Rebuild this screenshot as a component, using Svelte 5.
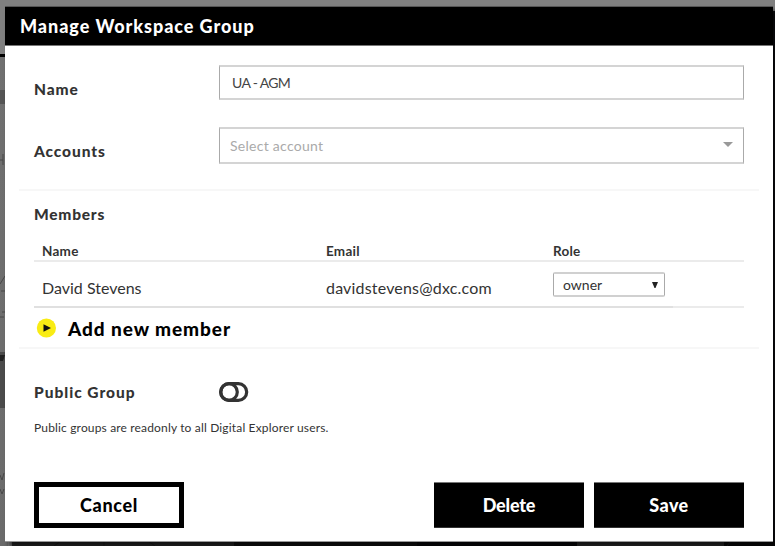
<script>
  const members = [{ name: 'David Stevens', email: 'davidstevens@dxc.com', role: 'owner' }];
</script>

<div class="page">
  <svg class="backdrop" width="775" height="546" viewBox="0 0 775 546" aria-hidden="true">
    <defs>
      <linearGradient id="left" x1="0" y1="0" x2="0" y2="1">
        <stop offset="0" stop-color="#707070" />
        <stop offset="1" stop-color="#6b6b6b" />
      </linearGradient>
    </defs>
    <rect width="775" height="546" fill="#808080" />
    <rect y="56" width="8" height="490" fill="url(#left)" />
    <rect y="54" width="6" height="3" fill="#000" />
    <rect y="90" width="6" height="14" fill="#555" />
    <rect y="352" width="6" height="56" fill="#4b4b4b" />
    <path d="M0 355h5l-2 6H0z" fill="#222" />
    <path d="M0 160h3M3 154v11M0 284l5-8M1 291h4M2 312h3M0 317h4M0 475l2 5 2-7M0 489l2 5 2-5" stroke="#484848" fill="none" />
    <rect x="773" y="11" width="2" height="535" fill="#101114" />
    <rect x="12" y="541" width="763" height="5" fill="#323232" />
    <rect x="234" y="541" width="183" height="5" fill="#141414" />
    <rect x="417" y="541" width="160" height="5" fill="#09090b" />
    <rect x="577" y="541" width="147" height="5" fill="#363636" />
    <rect x="724" y="541" width="51" height="5" fill="#0b0b0c" />
    <path d="M54 546l7-5M104 546v-5M155 546l-7-5M727 546l4-5" stroke="#222" />
  </svg>

  <section class="modal">
    <header><span>Manage Workspace Group</span></header>
    <div class="body">
      <div class="field name">
        <label for="group-name">Name</label>
        <div class="input" id="group-name"><span>UA - AGM</span></div>
      </div>
      <div class="field accounts">
        <label for="account">Accounts</label>
        <div class="input" id="account">
          <span>Select account</span>
          <svg width="10" height="5" viewBox="0 0 10 5"><path d="M0 0h10L5 5z" fill="#999" /></svg>
        </div>
      </div>
      <div class="members">
        <h2>Members</h2>
        <div class="row head"><b class="h-name">Name</b><b class="h-email">Email</b><b class="h-role">Role</b></div>
        {#each members as m}
          <div class="row member">
            <span class="m-name">{m.name}</span>
            <span class="m-email">{m.email}</span>
            <div class="select">
              <span>{m.role}</span>
              <svg width="6" height="6" viewBox="0 0 6 6"><path d="M0 0h6L3.5 6h-1z" fill="#222" /></svg>
            </div>
          </div>
          <div class="underline"></div>
        {/each}
        <div class="add">
          <svg width="20" height="20" viewBox="0 0 20 20"><circle cx="10.4" cy="10" r="9.6" fill="#f9ec14" /><path d="M7.5 6.2L15 10 7.5 13.8z" fill="#111" /></svg>
          <span>Add new member</span>
        </div>
      </div>
      <div class="public">
        <span class="plabel">Public Group</span>
        <svg width="30" height="20" viewBox="0 0 30 20" fill="none" stroke="#333" stroke-width="3.2">
          <rect x="1.7" y="1.7" width="26" height="16.6" rx="8.3" /><circle cx="10" cy="10" r="8.3" />
        </svg>
      </div>
      <p><span>Public groups are readonly to all Digital Explorer users.</span></p>
      <footer>
        <button class="cancel">Cancel</button>
        <button class="delete">Delete</button>
        <button class="save">Save</button>
      </footer>
    </div>
  </section>
</div>

<style>
  :global(body) { margin: 0; overflow: hidden; }
  .page { position: relative; width: 775px; height: 546px; overflow: hidden; box-sizing: border-box; padding: 6px 2px 0 5px; font-family: Lato, "Open Sans", sans-serif; color: #333; }
  .page * { box-sizing: border-box; white-space: nowrap; }
  .backdrop { position: absolute; left: 0; top: 0; }
  svg { display: block; flex: none; }
  .modal { position: relative; height: 536px; background: #fff; border-bottom: 1px solid #999; box-shadow: 4px 5px 5px rgba(0,0,0,.65); }
  header { height: 40px; background: #000; border-top: 1px solid #555; border-bottom: 1px solid #777; color: #fff; padding-left: 15px; font-size: 18px; font-weight: 900; line-height: 38px; letter-spacing: .94px; }
  .body { padding: 19px 14px 0; }
  .field { display: flex; padding: 0 15px; }
  label { width: 185px; font-weight: 900; font-size: 15.5px; line-height: 49px; letter-spacing: .9px; }
  .input { flex: 1; display: flex; align-items: center; justify-content: space-between; border: 1px solid #aaa; border-width: 2px 1px; border-top-color: #d4d4d4; border-bottom-color: #d4d4d4; font-size: 14px; }
  .name { height: 62px; }
  .name .input { height: 35px; padding-left: 12px; color: #444; letter-spacing: -.65px; }
  .accounts { height: 62px; }
  .accounts .input { height: 37px; padding: 0 10px; color: #aaa; letter-spacing: .27px; }
  .accounts .input svg { margin-top: -2px; }
  .members { height: 160px; border-top: 2px solid #f7f7f7; border-bottom: 2px solid #f7f7f7; padding: 0 15px; }
  h2 { margin: 0; height: 50px; line-height: 47px; font-size: 15.5px; font-weight: 900; letter-spacing: .75px; }
  .row { display: grid; grid-template-columns: 284px 227px 1fr; padding-left: 8px; }
  .head { height: 21px; border-bottom: 2px solid #ebebeb; font-size: 13.5px; line-height: 21px; letter-spacing: .25px; }
  .member { height: 44px; font-size: 16px; line-height: 51px; }
  .m-email { letter-spacing: .18px; }
  .select { width: 112px; height: 25px; margin-top: 10px; display: flex; align-items: center; justify-content: space-between; padding: 0 6px 0 9px; border: 1px solid #aaa; border-width: 2px 1px; border-top-color: #d0d0d0; border-bottom-color: #d0d0d0; border-radius: 2px; line-height: 20px; font-size: 14px; }
  .underline { height: 2px; background: linear-gradient(90deg, #e0e0e0 639px, #ebebeb 639px); }
  .add { display: flex; align-items: center; height: 40px; padding-left: 2px; gap: 12px; color: #000; font-size: 19px; font-weight: 900; line-height: 40px; letter-spacing: .92px; }
  .add span { padding-top: 1px; }
  .public { display: flex; align-items: center; height: 20px; margin: 33px 15px 0; font-size: 15.5px; font-weight: 900; letter-spacing: .98px; }
  .plabel { width: 185px; line-height: 19px; }
  p { margin: 16px 15px 0; height: 20px; line-height: 20px; font-size: 12px; letter-spacing: .16px; }
  footer { display: flex; margin: 44px 15px 0; }
  button { width: 150px; height: 46px; padding: 0; background: #000; color: #fff; border: 0; border-top: 1px solid #777; border-bottom: 1px solid #333; font: 900 18px/45px Lato, sans-serif; }
  .cancel { background: #fff; color: #000; border: 5px solid #000; margin-right: auto; line-height: 35px; letter-spacing: .65px; }
  .delete { margin-right: 10px; letter-spacing: -.2px; }
  .save { letter-spacing: .4px; }
</style>
